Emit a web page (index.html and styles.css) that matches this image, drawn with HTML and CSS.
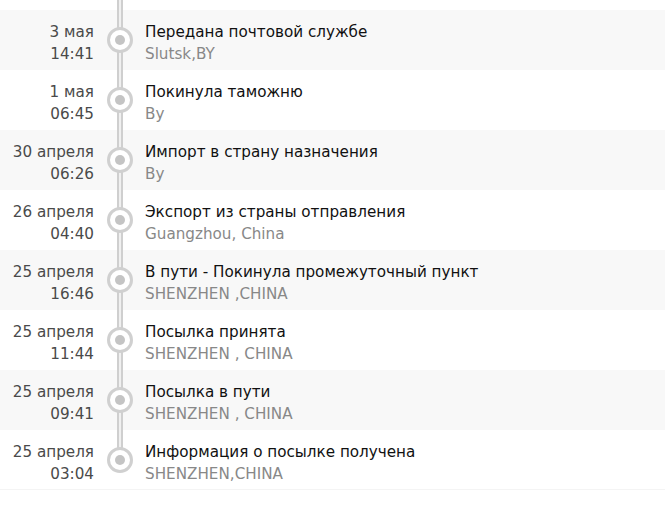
FILE: index.html
```html
<!DOCTYPE html>
<html lang="ru">
<head>
<meta charset="utf-8">
<title>Отслеживание</title>
<link rel="stylesheet" href="styles.css">
</head>
<body>
<ul class="track">
  <li class="ev">
    <div class="when"><span>3 мая</span><span>14:41</span></div>
    <div class="mark"><i class="dot"></i></div>
    <div class="what"><span class="st">Передана почтовой службе</span><span class="loc">Slutsk,BY</span></div>
  </li>
  <li class="ev">
    <div class="when"><span>1 мая</span><span>06:45</span></div>
    <div class="mark"><i class="dot"></i></div>
    <div class="what"><span class="st">Покинула таможню</span><span class="loc">By</span></div>
  </li>
  <li class="ev">
    <div class="when"><span>30 апреля</span><span>06:26</span></div>
    <div class="mark"><i class="dot"></i></div>
    <div class="what"><span class="st">Импорт в страну назначения</span><span class="loc">By</span></div>
  </li>
  <li class="ev">
    <div class="when"><span>26 апреля</span><span>04:40</span></div>
    <div class="mark"><i class="dot"></i></div>
    <div class="what"><span class="st">Экспорт из страны отправления</span><span class="loc">Guangzhou, China</span></div>
  </li>
  <li class="ev">
    <div class="when"><span>25 апреля</span><span>16:46</span></div>
    <div class="mark"><i class="dot"></i></div>
    <div class="what"><span class="st">В пути - Покинула промежуточный пункт</span><span class="loc">SHENZHEN ,CHINA</span></div>
  </li>
  <li class="ev">
    <div class="when"><span>25 апреля</span><span>11:44</span></div>
    <div class="mark"><i class="dot"></i></div>
    <div class="what"><span class="st">Посылка принята</span><span class="loc">SHENZHEN , CHINA</span></div>
  </li>
  <li class="ev">
    <div class="when"><span>25 апреля</span><span>09:41</span></div>
    <div class="mark"><i class="dot"></i></div>
    <div class="what"><span class="st">Посылка в пути</span><span class="loc">SHENZHEN , CHINA</span></div>
  </li>
  <li class="ev">
    <div class="when"><span>25 апреля</span><span>03:04</span></div>
    <div class="mark"><i class="dot"></i></div>
    <div class="what"><span class="st">Информация о посылке получена</span><span class="loc">SHENZHEN,CHINA</span></div>
  </li>
</ul>
</body>
</html>
```
FILE: styles.css
```css
html, body {
  margin: 0;
  padding: 0;
  background: #fff;
}
body {
  font-family: "DejaVu Sans", Verdana, sans-serif;
  font-size: 15.2px;
  line-height: 22px;
}
.track {
  list-style: none;
  margin: 0;
  padding: 10px 0 0 0;
}
.ev {
  display: flex;
  height: 60px;
  box-sizing: border-box;
}
.ev:nth-child(odd) {
  background: #f8f8f8;
}
.ev:last-child {
  background: #fff;
  border-bottom: 1px solid #f4f4f4;
}
.when {
  width: 95px;
  box-sizing: border-box;
  padding: 11px 1px 0 0;
  display: flex;
  flex-direction: column;
  align-items: flex-end;
  color: #4a4a4a;
}
.mark {
  width: 50px;
  position: relative;
  display: flex;
  justify-content: center;
  align-items: center;
}
.mark::before {
  content: "";
  position: absolute;
  left: 22px;
  width: 2px;
  top: 0;
  bottom: 0;
  background: #f0f0f0;
  border-left: 2px solid #cfcfcf;
  border-right: 2px solid #cfcfcf;
}
.ev:first-child .mark::before {
  top: -10px;
}
.ev:last-child .mark::before {
  bottom: 30px;
}
.dot {
  position: relative;
  width: 20px;
  height: 20px;
  border: 3px solid #d0d0d0;
  border-radius: 50%;
  background: #fff;
  display: flex;
  justify-content: center;
  align-items: center;
}
.dot::after {
  content: "";
  width: 10px;
  height: 10px;
  border-radius: 50%;
  background: #c4c4c4;
}
.what {
  padding: 11px 0 0 0;
  display: flex;
  flex-direction: column;
  align-items: flex-start;
}
.st {
  color: #111;
}
.loc {
  color: #888;
}
```
